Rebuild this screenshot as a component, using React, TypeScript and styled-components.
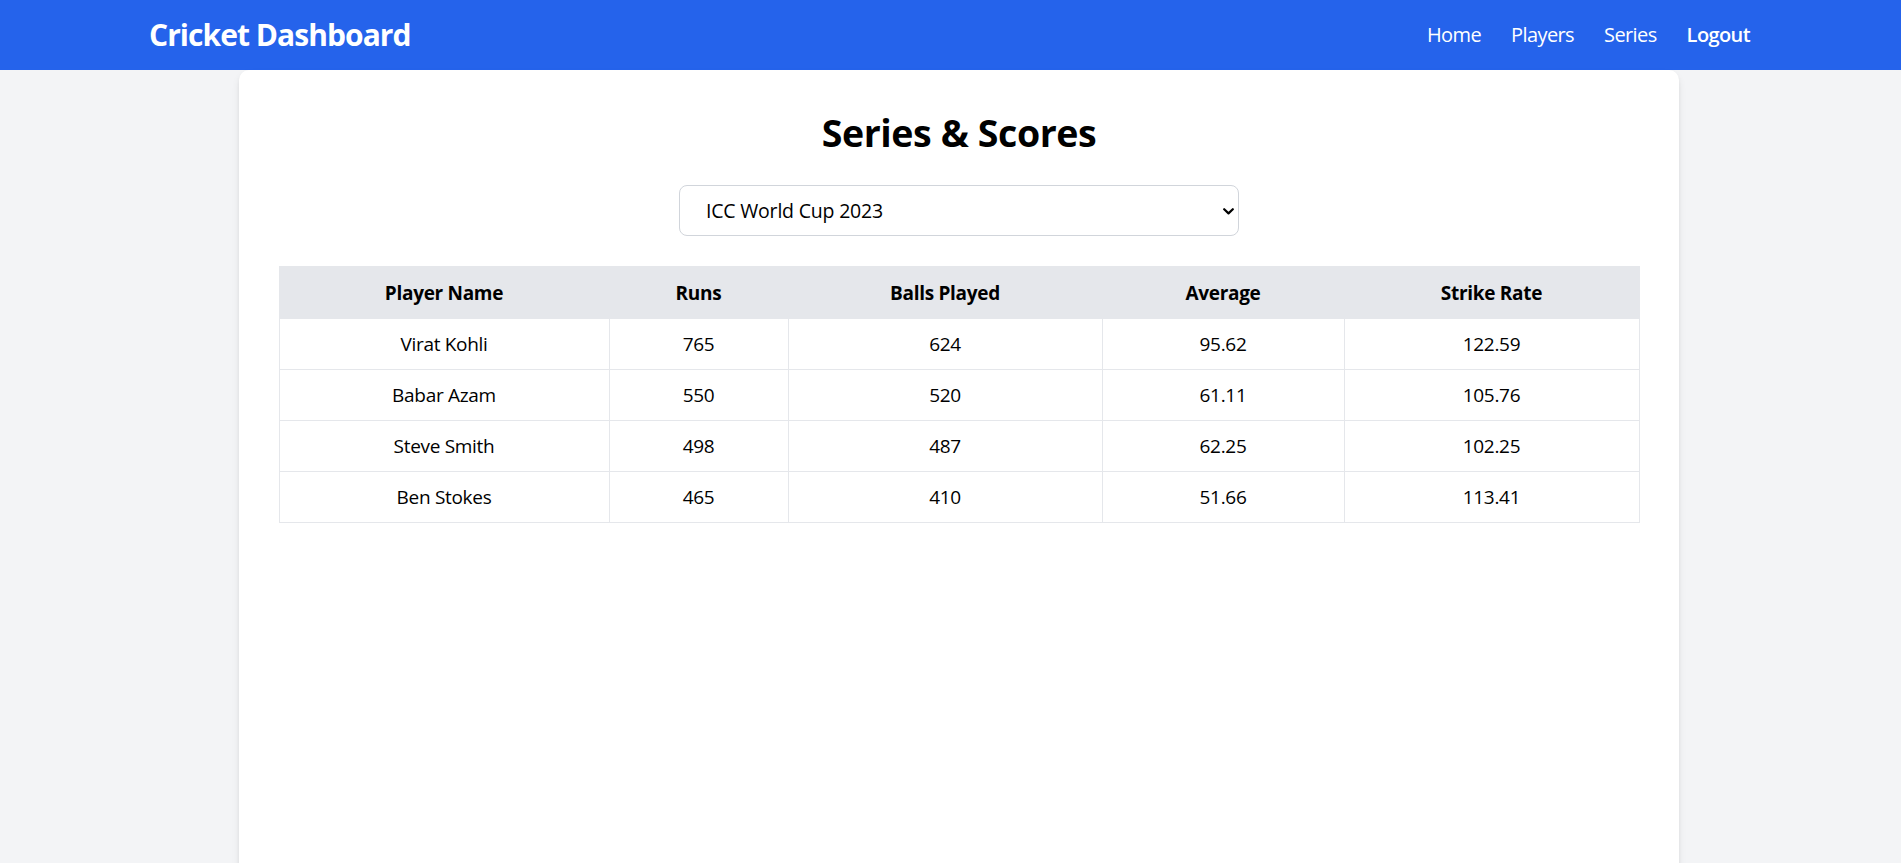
import React from "react";
import styled, { createGlobalStyle } from "styled-components";

const GlobalStyle = createGlobalStyle`
  html, body {
    margin: 0;
    padding: 0;
    background: #f3f4f6;
    font-family: "Open Sans", "Noto Sans", "Liberation Sans", sans-serif;
    color: #000;
  }
  * { box-sizing: border-box; }
`;

const Page = styled.div`
  min-height: 100vh;
  background: #f3f4f6;
`;

const Header = styled.header`
  height: 70px;
  background: #2563eb;
  display: flex;
  align-items: center;
  justify-content: space-between;
  padding: 0 151px 0 149px;
  color: #fff;
`;

const Brand = styled.h1`
  margin: 0;
  font-size: 30px;
  line-height: 40px;
  font-weight: 700;
  letter-spacing: -0.95px;
`;

const Nav = styled.nav`
  display: flex;
  align-items: center;
  gap: 30px;
`;

const NavLink = styled.a<{ $strong?: boolean }>`
  font-size: 20px;
  line-height: 30px;
  font-weight: ${(p) => (p.$strong ? 600 : 400)};
  color: #fff;
  text-decoration: none;
  letter-spacing: -0.6px;
  cursor: pointer;
`;

const Main = styled.main`
  display: flex;
  justify-content: center;
  padding-left: 17px;
`;

const Card = styled.section`
  width: 1440px;
  min-height: calc(100vh - 70px + 40px);
  background: #fff;
  border-radius: 10px 10px 0 0;
  box-shadow: 0 5px 8px -1px rgba(0, 0, 0, 0.1), 0 2px 5px -2px rgba(0, 0, 0, 0.1);
  padding: 40px;
  display: flex;
  flex-direction: column;
  align-items: center;
`;

const Title = styled.h2`
  margin: 0 0 30px;
  font-size: 37.5px;
  line-height: 45px;
  font-weight: 700;
  letter-spacing: -0.4px;
`;

const SelectWrap = styled.div`
  position: relative;
  width: 560px;
  margin-bottom: 30px;
`;

const Select = styled.select`
  appearance: none;
  -webkit-appearance: none;
  width: 100%;
  height: 51px;
  padding: 0 40px 0 26px;
  font-family: inherit;
  font-size: 19.5px;
  letter-spacing: -0.2px;
  color: #000;
  background: #fff;
  border: 1px solid #d1d5db;
  border-radius: 8px;
  outline: none;
`;

const Chevron = styled.svg`
  position: absolute;
  right: 5px;
  top: 50%;
  width: 11px;
  height: 7px;
  margin-top: -3px;
  pointer-events: none;
`;

const Table = styled.table`
  width: 100%;
  border-collapse: collapse;
  table-layout: fixed;
  border: 1px solid #e5e7eb;
`;

const Col = styled.col<{ $w: number }>`
  width: ${(p) => p.$w}px;
`;

const HeadRow = styled.tr`
  background: #e5e7eb;
`;

const Th = styled.th`
  padding: 11px 10px 10px;
  font-size: 19px;
  line-height: 30px;
  font-weight: 700;
  text-align: center;
  border: 1px solid #e5e7eb;
  letter-spacing: -0.3px;
`;

const Td = styled.td`
  padding: 10px;
  font-size: 19px;
  line-height: 30px;
  font-weight: 400;
  text-align: center;
  border: 1px solid #e5e7eb;
  letter-spacing: -0.3px;
`;

const columns = [
  { label: "Player Name", w: 330 },
  { label: "Runs", w: 179 },
  { label: "Balls Played", w: 314 },
  { label: "Average", w: 242 },
  { label: "Strike Rate", w: 295 },
];

const rows = [
  ["Virat Kohli", "765", "624", "95.62", "122.59"],
  ["Babar Azam", "550", "520", "61.11", "105.76"],
  ["Steve Smith", "498", "487", "62.25", "102.25"],
  ["Ben Stokes", "465", "410", "51.66", "113.41"],
];

export default function App() {
  return (
    <Page>
      <GlobalStyle />
      <Header>
        <Brand>Cricket Dashboard</Brand>
        <Nav>
          <NavLink>Home</NavLink>
          <NavLink>Players</NavLink>
          <NavLink>Series</NavLink>
          <NavLink $strong>Logout</NavLink>
        </Nav>
      </Header>
      <Main>
        <Card>
          <Title>Series &amp; Scores</Title>
          <SelectWrap>
            <Select defaultValue="wc2023">
              <option value="wc2023">ICC World Cup 2023</option>
              <option value="ashes2023">The Ashes 2023</option>
              <option value="asia2023">Asia Cup 2023</option>
            </Select>
            <Chevron viewBox="0 0 11 7" fill="none">
              <path d="M1.2 1.2 L5.5 5.4 L9.8 1.2" stroke="#000" strokeWidth="2.2" strokeLinecap="round" strokeLinejoin="round" />
            </Chevron>
          </SelectWrap>
          <Table>
            <colgroup>
              {columns.map((c) => (
                <Col key={c.label} $w={c.w} />
              ))}
            </colgroup>
            <thead>
              <HeadRow>
                {columns.map((c) => (
                  <Th key={c.label}>{c.label}</Th>
                ))}
              </HeadRow>
            </thead>
            <tbody>
              {rows.map((r) => (
                <tr key={r[0]}>
                  {r.map((v, i) => (
                    <Td key={i}>{v}</Td>
                  ))}
                </tr>
              ))}
            </tbody>
          </Table>
        </Card>
      </Main>
    </Page>
  );
}
